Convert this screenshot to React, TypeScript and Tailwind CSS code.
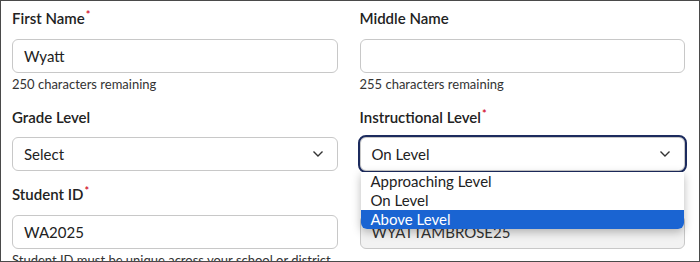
import React from 'react';

function Label({ text, required }: { text: string; required?: boolean }) {
  return (
    <div className="h-5 text-[15px] font-semibold leading-5 text-[#222]">
      {text}
      {required && <sup className="ml-[1px] text-[11px] text-[#d0021b]">*</sup>}
    </div>
  );
}

function Chevron() {
  return (
    <svg width="12" height="8" viewBox="0 0 12 8" className="text-[#333]">
      <path d="M1.5 1.5 L6 6 L10.5 1.5" fill="none" stroke="currentColor" strokeWidth="1.4" />
    </svg>
  );
}

export default function App() {
  return (
    <div className="h-[262px] w-[700px] overflow-hidden border border-[#4a4a4a] bg-white font-['Lato',sans-serif]">
      <div className="grid grid-cols-2 gap-x-[22px] pl-[11px] pr-[14px] pt-[7px]">
        {/* row 1 */}
        <div>
          <Label text="First Name" required />
          <div className="mt-[11px] flex h-[34px] items-center rounded-md border border-[#c8c8c8] px-[11px] text-[15px] text-[#222]">
            Wyatt
          </div>
          <p className="mt-[3px] text-[13px] leading-4 text-[#333]">250 characters remaining</p>
        </div>
        <div>
          <Label text="Middle Name" />
          <div className="mt-[11px] h-[34px] rounded-md border border-[#c8c8c8]" />
          <p className="mt-[3px] text-[13px] leading-4 text-[#333]">255 characters remaining</p>
        </div>

        {/* row 2 */}
        <div className="mt-[15px]">
          <Label text="Grade Level" />
          <div className="mt-[10px] flex h-[34px] items-center justify-between rounded-md border border-[#c8c8c8] pl-[11px] pr-[13px] text-[15px] text-[#222]">
            Select
            <Chevron />
          </div>
        </div>
        <div className="relative mt-[15px]">
          <Label text="Instructional Level" required />
          <div className="mt-[10px] flex h-[34px] items-center justify-between rounded-md border border-[#c8c8c8] pl-[11px] pr-[13px] text-[15px] text-[#222] outline-2 outline-[#1c2b5e]">
            On Level
            <Chevron />
          </div>
          <div className="absolute left-[1px] right-[1px] top-[65px] z-10 rounded-b-md bg-white text-[15px] leading-[19px] text-[#222] shadow-[0_3px_10px_rgba(0,0,0,0.28)]">
            <div className="px-[10px]">Approaching Level</div>
            <div className="px-[10px]">On Level</div>
            <div className="rounded-b-md bg-[#1a64d2] px-[10px] text-white">Above Level</div>
          </div>
        </div>

        {/* row 3 */}
        <div className="mt-[13px]">
          <Label text="Student ID" required />
          <div className="mt-[11px] flex h-[34px] items-center rounded-md border border-[#c8c8c8] px-[11px] text-[15px] text-[#222]">
            WA2025
          </div>
          <p className="mt-[3px] text-[13px] leading-4 text-[#333]">
            Student ID must be unique across your school or district.
          </p>
        </div>
        <div className="mt-[13px]">
          <div className="h-5" />
          <div className="mt-[11px] flex h-[34px] items-center rounded-md border border-[#c8c8c8] bg-[#f2f2f2] px-[11px] text-[15px] text-[#333]">
            WYATTAMBROSE25
          </div>
        </div>
      </div>
    </div>
  );
}
